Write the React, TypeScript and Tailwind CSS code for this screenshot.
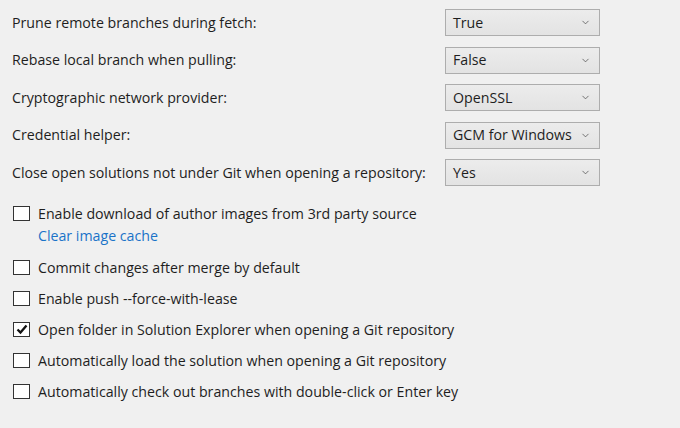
import { ChevronDown } from "lucide-react";

type SelectRowProps = { label: string; value: string };

const SelectRow = ({ label, value }: SelectRowProps) => {
  return (
    <div className="flex h-[27px] items-center">
      <span className="w-[445px] shrink-0 pl-[12px]">{label}</span>
      <div className="flex h-[27px] w-[155px] shrink-0 items-center justify-between border border-[#adadad] bg-gradient-to-b from-[#ececec] to-[#e3e3e3] pl-[7px] pr-[8px]">
        <span>{value}</span>
        <ChevronDown size={11} strokeWidth={1.6} className="text-[#4a4a4a]" />
      </div>
    </div>
  );
};

type CheckRowProps = { label: string; checked?: boolean };

const CheckRow = ({ label, checked }: CheckRowProps) => {
  return (
    <div className="flex h-[31px] items-center pl-[13px]">
      <div className="flex h-[15px] w-[17px] shrink-0 items-center justify-center border border-[#333333] bg-white">
        {checked && (
          <svg width="12" height="11" viewBox="0 0 12 11">
            <path d="M1.5 5.5 L4.5 8.6 L10.5 1.5" fill="none" stroke="#111" strokeWidth="2.3" />
          </svg>
        )}
      </div>
      <span className="ml-[8px]">{label}</span>
    </div>
  );
};

export default function App() {
  return (
    <div
      className="h-[428px] w-[680px] overflow-hidden bg-[#f0f0f0] text-[14.2px] text-[#1e1e1e]"
      style={{ fontFamily: '"Open Sans", "Noto Sans", sans-serif' }}>
      <div className="flex flex-col gap-[10.5px] pt-[9px]">
        <SelectRow label="Prune remote branches during fetch:" value="True" />
        <SelectRow label="Rebase local branch when pulling:" value="False" />
        <SelectRow label="Cryptographic network provider:" value="OpenSSL" />
        <SelectRow label="Credential helper:" value="GCM for Windows" />
        <SelectRow label="Close open solutions not under Git when opening a repository:" value="Yes" />
      </div>
      <div className="mt-[12px] flex flex-col">
        <CheckRow label="Enable download of author images from 3rd party source" />
        <a className="-mt-[3px] ml-[38px] leading-[20px] text-[#1a73c8]">Clear image cache</a>
        <div className="mt-[6px]">
          <CheckRow label="Commit changes after merge by default" />
          <CheckRow label="Enable push --force-with-lease" />
          <CheckRow label="Open folder in Solution Explorer when opening a Git repository" checked />
          <CheckRow label="Automatically load the solution when opening a Git repository" />
          <CheckRow label="Automatically check out branches with double-click or Enter key" />
        </div>
      </div>
    </div>
  );
}
